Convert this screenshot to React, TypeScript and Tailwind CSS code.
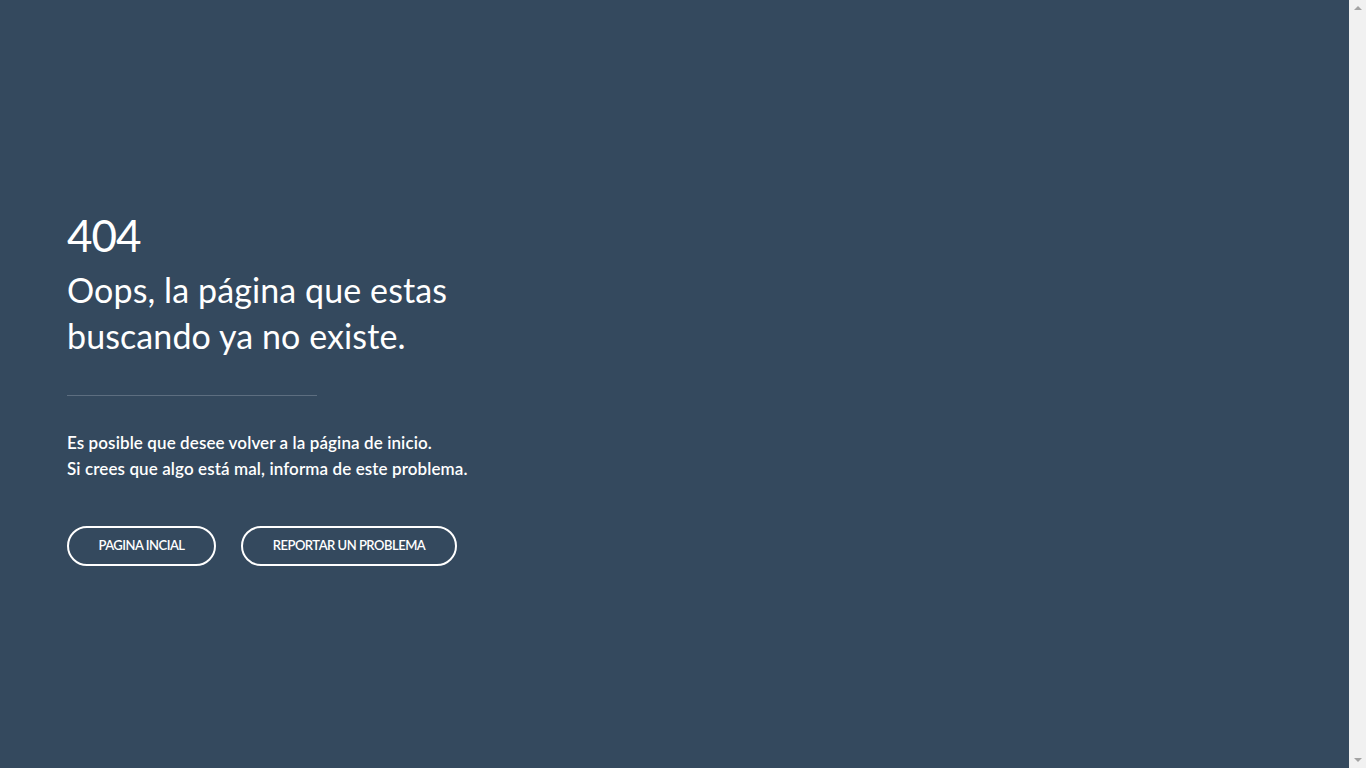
import React from "react";

export default function App() {
  return (
    <div
      className="flex h-screen w-full bg-[#34495e] text-white"
      style={{ fontFamily: "Lato, 'Noto Sans', sans-serif" }}
    >
      <main className="flex flex-1 flex-col justify-center pl-[67px] pt-[6px]">
        <h1 className="text-[44px] leading-[52px] font-normal tracking-[-1px]">404</h1>
        <h2 className="mt-[6px] w-[420px] text-[34px] leading-[46px] font-normal tracking-[0.1px]">
          Oops, la página que estas buscando ya no existe.
        </h2>
        <div className="mt-[36px] h-px w-[250px] bg-[#5d6e80]" />
        <p className="mt-[34px] text-[17px] font-semibold leading-[26px] tracking-[0.1px]">
          Es posible que desee volver a la página de inicio.
          <br />
          Si crees que algo está mal, informa de este problema.
        </p>
        <div className="mt-[44px] flex gap-[25px]">
          <button className="h-[40px] w-[149px] rounded-full border-2 border-white text-[13px] font-semibold uppercase tracking-[-0.5px]">
            Pagina incial
          </button>
          <button className="h-[40px] w-[216px] rounded-full border-2 border-white text-[13px] font-semibold uppercase tracking-[-0.5px]">
            Reportar un problema
          </button>
        </div>
      </main>
      <aside className="flex w-[17px] flex-col items-center justify-between bg-[#f1f1f1] py-[6px]">
        <div className="h-0 w-0 border-x-[4px] border-b-[4px] border-x-transparent border-b-[#a3a3a3]" />
        <div className="h-0 w-0 border-x-[4px] border-t-[4px] border-x-transparent border-t-[#a3a3a3]" />
      </aside>
    </div>
  );
}
